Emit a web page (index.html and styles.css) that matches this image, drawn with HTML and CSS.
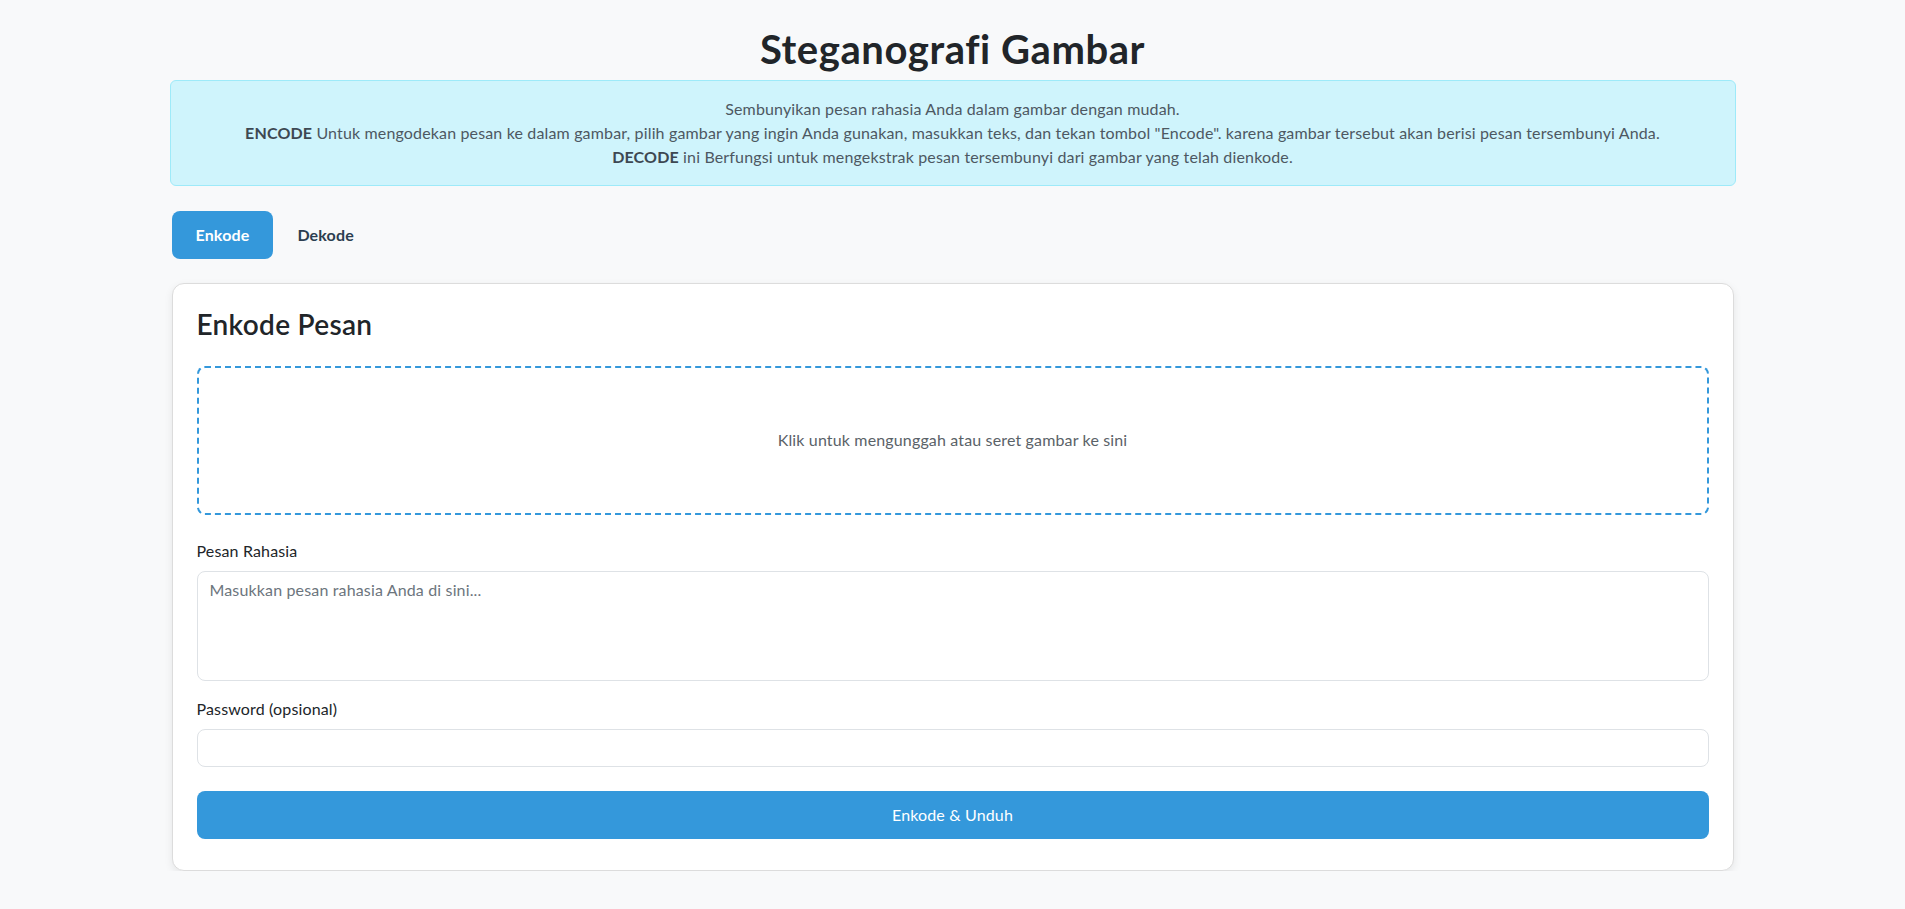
FILE: index.html
```html
<!DOCTYPE html>
<html lang="id">
<head>
<meta charset="utf-8">
<title>Steganografi Gambar</title>
<link rel="stylesheet" href="styles.css">
</head>
<body>
<div class="container">
  <h1 class="title">Steganografi Gambar</h1>
  <div class="alert">
    Sembunyikan pesan rahasia Anda dalam gambar dengan mudah.<br>
    <strong>ENCODE</strong> Untuk mengodekan pesan ke dalam gambar, pilih gambar yang ingin Anda gunakan, masukkan teks, dan tekan tombol "Encode". karena gambar tersebut akan berisi pesan tersembunyi Anda.<br>
    <strong>DECODE</strong> ini Berfungsi untuk mengekstrak pesan tersembunyi dari gambar yang telah dienkode.
  </div>
  <div class="tabs">
    <button class="tab active">Enkode</button>
    <button class="tab">Dekode</button>
  </div>
  <div class="card">
    <h2 class="card-title">Enkode Pesan</h2>
    <div class="dropzone">Klik untuk mengunggah atau seret gambar ke sini</div>
    <div class="field">
      <label class="label">Pesan Rahasia</label>
      <textarea class="control textarea" rows="4" placeholder="Masukkan pesan rahasia Anda di sini..."></textarea>
    </div>
    <div class="field">
      <label class="label">Password (opsional)</label>
      <input class="control" type="password">
    </div>
    <button class="submit">Enkode &amp; Unduh</button>
  </div>
</div>
</body>
</html>
```
FILE: styles.css
```css
* { box-sizing: border-box; }
html, body { margin: 0; padding: 0; }
body {
  background: #f8f9fa;
  font-family: "Segoe UI", Lato, "Noto Sans", sans-serif;
  font-size: 16px;
  line-height: 24px;
  color: #212529;
  letter-spacing: 0.15px;
  font-variant-ligatures: none;
}
.container {
  width: 1566px;
  margin: 0 auto;
  padding-top: 24.5px;
}
.title {
  margin: 0 0 7.5px;
  text-align: center;
  font-size: 40px;
  line-height: 48px;
  font-weight: 700;
  letter-spacing: 0.55px;
  color: #212529;
}
.alert {
  background: #cff4fc;
  border: 1px solid #9eeaf9;
  border-radius: 6px;
  padding: 16px;
  text-align: center;
  color: #4d5862;
}
.alert strong { font-weight: 700; color: #3d4852; }
.tabs {
  display: flex;
  margin: 24.5px 2px 0;
}
.tab {
  font-family: inherit;
  font-size: 16px;
  line-height: 24px;
  font-weight: 700;
  letter-spacing: inherit;
  padding: 12px 24px;
  border: none;
  border-radius: 8px;
  background: transparent;
  color: #2c3e50;
}
.tab.active { background: #3498db; color: #fff; }
.card {
  margin: 24.5px 2px 0;
  background: #fff;
  border: 1px solid #dcdcdc;
  border-radius: 12px;
  box-shadow: 0 3px 8px rgba(0,0,0,0.08);
  padding: 24px 24px 31px;
}
.card-title {
  margin: 0 0 24px;
  font-size: 28px;
  line-height: 33.6px;
  font-weight: 600;
  letter-spacing: 0.3px;
  color: #212529;
}
.dropzone {
  border: 2px dashed #3498db;
  border-radius: 8px;
  padding: 60px 20px 61px;
  text-align: center;
  color: #5a6268;
  margin-bottom: 24px;
}
.field { display: flex; flex-direction: column; margin-bottom: 16px; }
.field + .field { margin-bottom: 24px; }
.label { margin-bottom: 8px; color: #212529; }
.control {
  display: block;
  width: 100%;
  font-family: inherit;
  font-size: 16px;
  line-height: 24px;
  letter-spacing: inherit;
  padding: 6px 12px;
  border: 1px solid #dee2e6;
  border-radius: 8px;
  background: #fff;
  color: #212529;
  height: 38px;
}
.textarea { height: 110px; resize: none; }
.control::placeholder { color: #6c757d; }
.submit {
  display: block;
  width: 100%;
  font-family: inherit;
  font-size: 16px;
  line-height: 24px;
  letter-spacing: inherit;
  padding: 12px;
  border: none;
  border-radius: 8px;
  background: #3498db;
  color: #fff;
}
```
